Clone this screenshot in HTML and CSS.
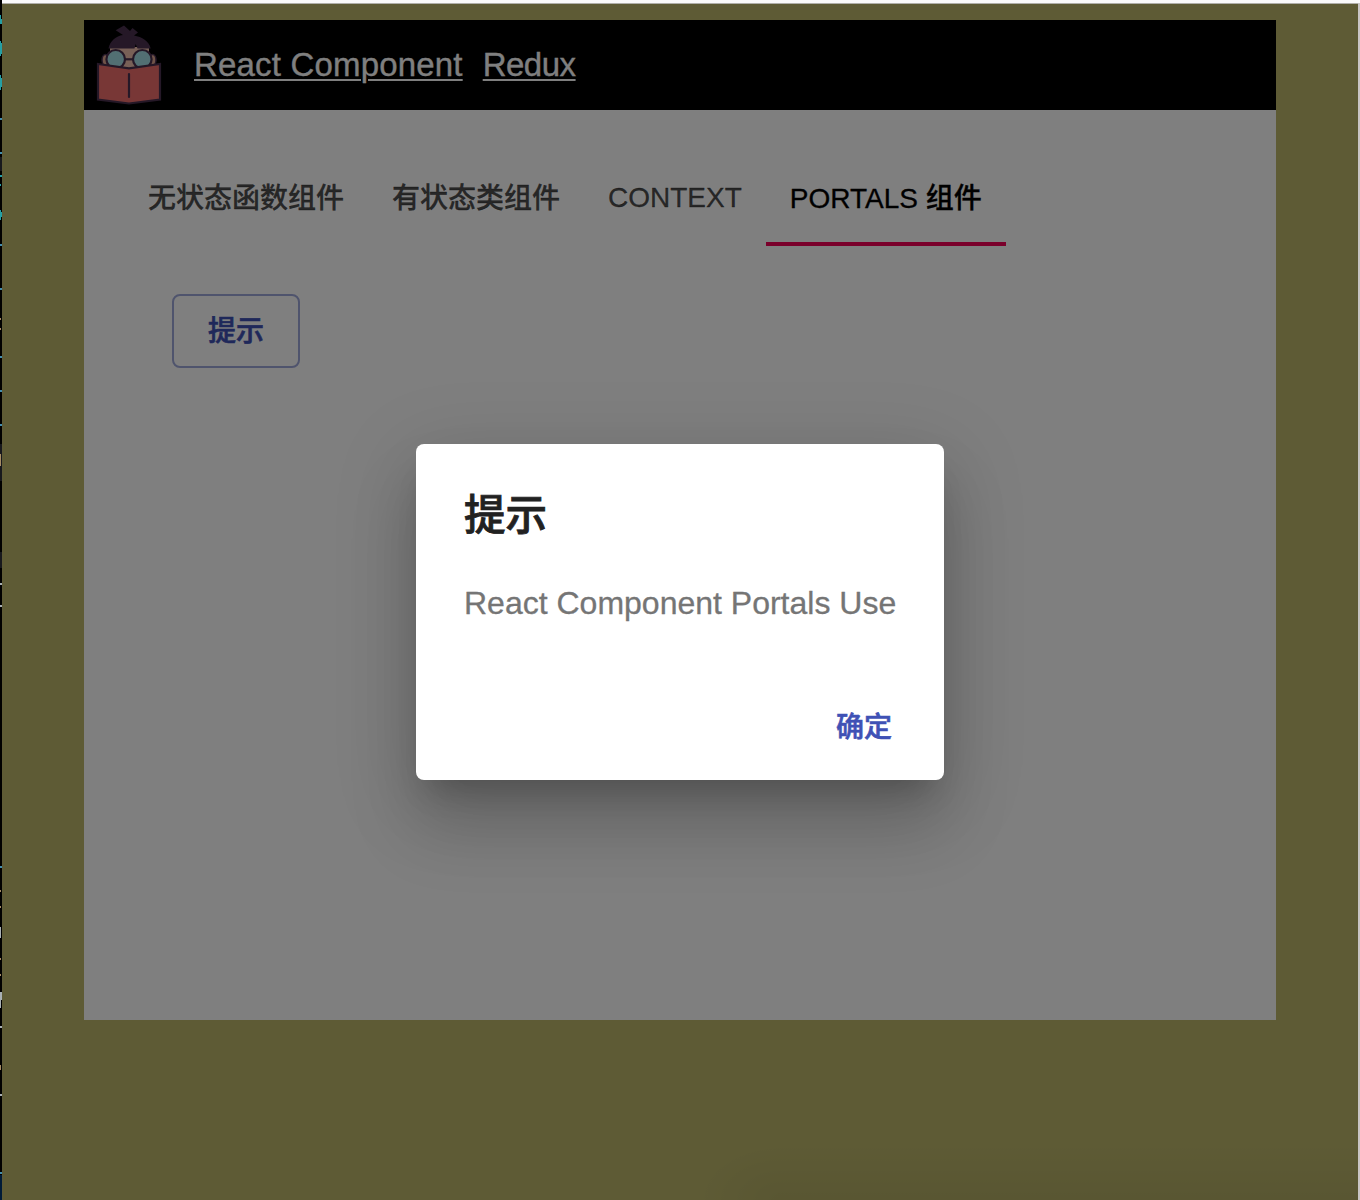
FILE: index.html
```html
<!DOCTYPE html>
<html lang="zh-CN">
<head>
<meta charset="utf-8">
<title>React Component</title>
<link rel="stylesheet" href="styles.css">
</head>
<body>
<div class="desktop">
  <svg class="editor-edge" width="2" height="1200" viewBox="0 0 2 1200" aria-hidden="true">
    <path fill="#000" d="M0 0h2v1200H0z"/>
    <path fill="#001b38" d="M0 1175h2v25H0z"/>
    <path fill="#18191d" d="M0 157h2v14H0zM0 444h2v37H0zM0 552h2v16H0z"/>
    <path fill="#259fa4" d="M0 15h1v9H0zM1 19h1v5H1zM0 41h1v15H0zM1 43h1v11H1zM0 75h1v15H0zM1 78h1v9H1zM0 175h2v2H0zM0 184h1v2H0zM0 210h1v10H0zM1 212h1v5H1z"/>
    <path fill="#438eae" d="M0 118h2v2H0zM0 152h2v2H0zM0 244h2v2H0zM0 288h2v2H0zM0 356h2v2H0zM0 390h2v2H0zM0 424h2v2H0zM0 866h2v2H0zM0 1172h2v2H0z"/>
    <path fill="#a58b65" d="M0 318h1v2H0zM0 328h1v2H0zM0 454h1v12H0zM0 890h1v2H0zM0 906h1v2H0zM0 958h1v2H0zM0 974h1v2H0zM0 1065h1v5H0z"/>
    <path fill="#a9b0b4" d="M0 583h2v2H0zM0 605h2v2H0zM0 927h1v11H0zM0 992h2v8H0zM0 1000h1v8H0zM0 1026h2v2H0zM0 1094h2v2H0z"/>
  </svg>
  <div class="browser">
    <div class="toolbar-edge"></div>
    <div class="viewport">
      <div class="app">
        <header class="header">
          <svg class="logo" width="66" height="80" viewBox="0 0 66 80" aria-hidden="true">
            <g fill="#e0a892" stroke="#4a304f" stroke-width="1.500">
              <ellipse cx="9.500" cy="35" rx="3.500" ry="5.500"/>
              <ellipse cx="56.500" cy="35" rx="3.500" ry="5.500"/>
            </g>
            <path fill="#f0c1ae" d="M14 22h39v20l-20 3-19-3z"/>
            <path fill="#4a304f" d="M12.500 23.500C14 16 20 11 27 10L19.700 5.300 28 .500l6 5.500 2.500-3 5.500 4.500-4 3C46 12 53 16 54.700 23.500H41.500L39.700 19 38.500 23.500z"/>
            <g fill="#a4dfe7" stroke="#4a304f" stroke-width="2.200">
              <circle cx="19.700" cy="34.300" r="9.300"/><circle cx="46.300" cy="34.300" r="9.300"/>
            </g>
            <path d="M29 34.300h8" fill="none" stroke="#4a304f" stroke-width="2.200"/>
            <path fill="#f06f6d" stroke="#4a304f" stroke-width="2.200" d="M2 39l31 4.300L64 39v35.500l-31 4-31-4z"/>
            <path d="M33 49v23" stroke="#4a304f" stroke-width="2.200" stroke-linecap="round"/>
          </svg>
          <nav class="nav">
            <a class="nav-link" href="#component">React Component</a>
            <a class="nav-link nav-link-short" href="#redux">Redux</a>
          </nav>
        </header>
        <div class="tabs" role="tablist">
          <div class="tab tab-cjk" role="tab">无状态函数组件</div>
          <div class="tab tab-cjk" role="tab">有状态类组件</div>
          <div class="tab" role="tab">CONTEXT</div>
          <div class="tab tab-active" role="tab">PORTALS 组件</div>
        </div>
        <main class="content"><button class="outlined">提示</button></main>
      </div>
      <div class="backdrop">
        <section class="dialog" role="dialog">
          <h2 class="dialog-title">提示</h2>
          <p class="dialog-text">React Component Portals Use</p>
          <div class="dialog-actions"><button class="confirm">确定</button></div>
        </section>
      </div>
    </div>
  </div>
  <div class="window-edge"></div>
</div>
</body>
</html>
```
FILE: styles.css
```css
* { box-sizing: border-box; }
body {
  margin: 0;
  font-family: "Liberation Sans", "Noto Sans CJK SC", sans-serif;
}
button { font: inherit; }
.desktop {
  display: flex;
  width: 1360px;
  height: 1200px;
  overflow: hidden;
}
.editor-edge { flex: none; }
.browser {
  flex: 1;
  display: flex;
  flex-direction: column;
}
.toolbar-edge {
  height: 4px;
  background: #fafafa;
  border-bottom: 1px solid #b0afa9;
}
.window-edge {
  width: 2px;
  background: #c9c5c5;
  border-top: 3px solid #fafafa;
}
.viewport {
  position: relative;
  flex: 1;
  padding: 16px 82px 0;
  background:
    radial-gradient(ellipse 90px 60px at 100% 100%, rgba(0, 0, 0, .06), transparent) 690px 100% / 90px 60px no-repeat,
    linear-gradient(transparent, rgba(0, 0, 0, .06)) 780px 100% / 600px 60px no-repeat,
    #bdb76b;
}
.app {
  height: 1000px;
  background: #fff;
}
.header {
  display: flex;
  align-items: center;
  height: 90px;
  padding-left: 12px;
  background: #000;
}
.nav {
  display: flex;
  gap: 20px;
  margin-left: 32px;
}
.nav-link {
  color: #fff;
  font-size: 33px;
  line-height: 40px;
  letter-spacing: .18px;
  -webkit-text-stroke: .3px #fff;
  text-decoration-thickness: 2px;
  text-underline-offset: 3px;
}
.nav-link-short { letter-spacing: -.5px; }
.tabs {
  display: flex;
  height: 96px;
  margin: 40px 0 0 40px;
}
.tab {
  display: flex;
  align-items: center;
  height: 96px;
  padding: 0 24px;
  color: rgba(0, 0, 0, .7);
  font-size: 28px;
  font-weight: 500;
  -webkit-text-stroke: .3px;
  white-space: nowrap;
}
.tab-cjk { padding-bottom: 4px; }
.tab-active {
  width: 240px;
  color: #000;
  border-bottom: 4px solid #f50057;
}
.content { padding: 48px 88px; }
.outlined {
  display: block;
  width: 128px;
  height: 74px;
  padding: 0 0 4px;
  border: 2px solid rgba(63, 81, 181, .5);
  border-radius: 8px;
  background: transparent;
  color: #3f51b5;
  font-size: 28px;
  font-weight: 500;
  -webkit-text-stroke: .6px;
}
.backdrop {
  position: absolute;
  inset: 0;
  display: flex;
  align-items: flex-start;
  justify-content: center;
  padding-top: 440px;
  background: rgba(0, 0, 0, .5);
}
.dialog {
  width: 528px;
  height: 336px;
  padding: 32px 48px 16px;
  border-radius: 8px;
  background: #fff;
  box-shadow: 0 22px 30px -14px rgba(0, 0, 0, .2),
    0 48px 68px 3px rgba(0, 0, 0, .14),
    0 18px 80px 10px rgba(0, 0, 0, .12);
}
.dialog-title {
  height: 80px;
  margin: 0;
  color: #212121;
  font-size: 41.5px;
  font-weight: 500;
  -webkit-text-stroke: .8px;
  line-height: 80px;
}
.dialog-text {
  height: 118px;
  margin: 20px 0 0;
  color: #757575;
  font-size: 32px;
  line-height: 54px;
  -webkit-text-stroke: .3px;
  white-space: nowrap;
}
.dialog-actions {
  display: flex;
  justify-content: flex-end;
  margin-right: -32px;
}
.confirm {
  width: 128px;
  height: 64px;
  padding: 0 0 2px;
  border: 0;
  background: transparent;
  color: #3f51b5;
  font-size: 28px;
  font-weight: 500;
  -webkit-text-stroke: .6px;
}
```
